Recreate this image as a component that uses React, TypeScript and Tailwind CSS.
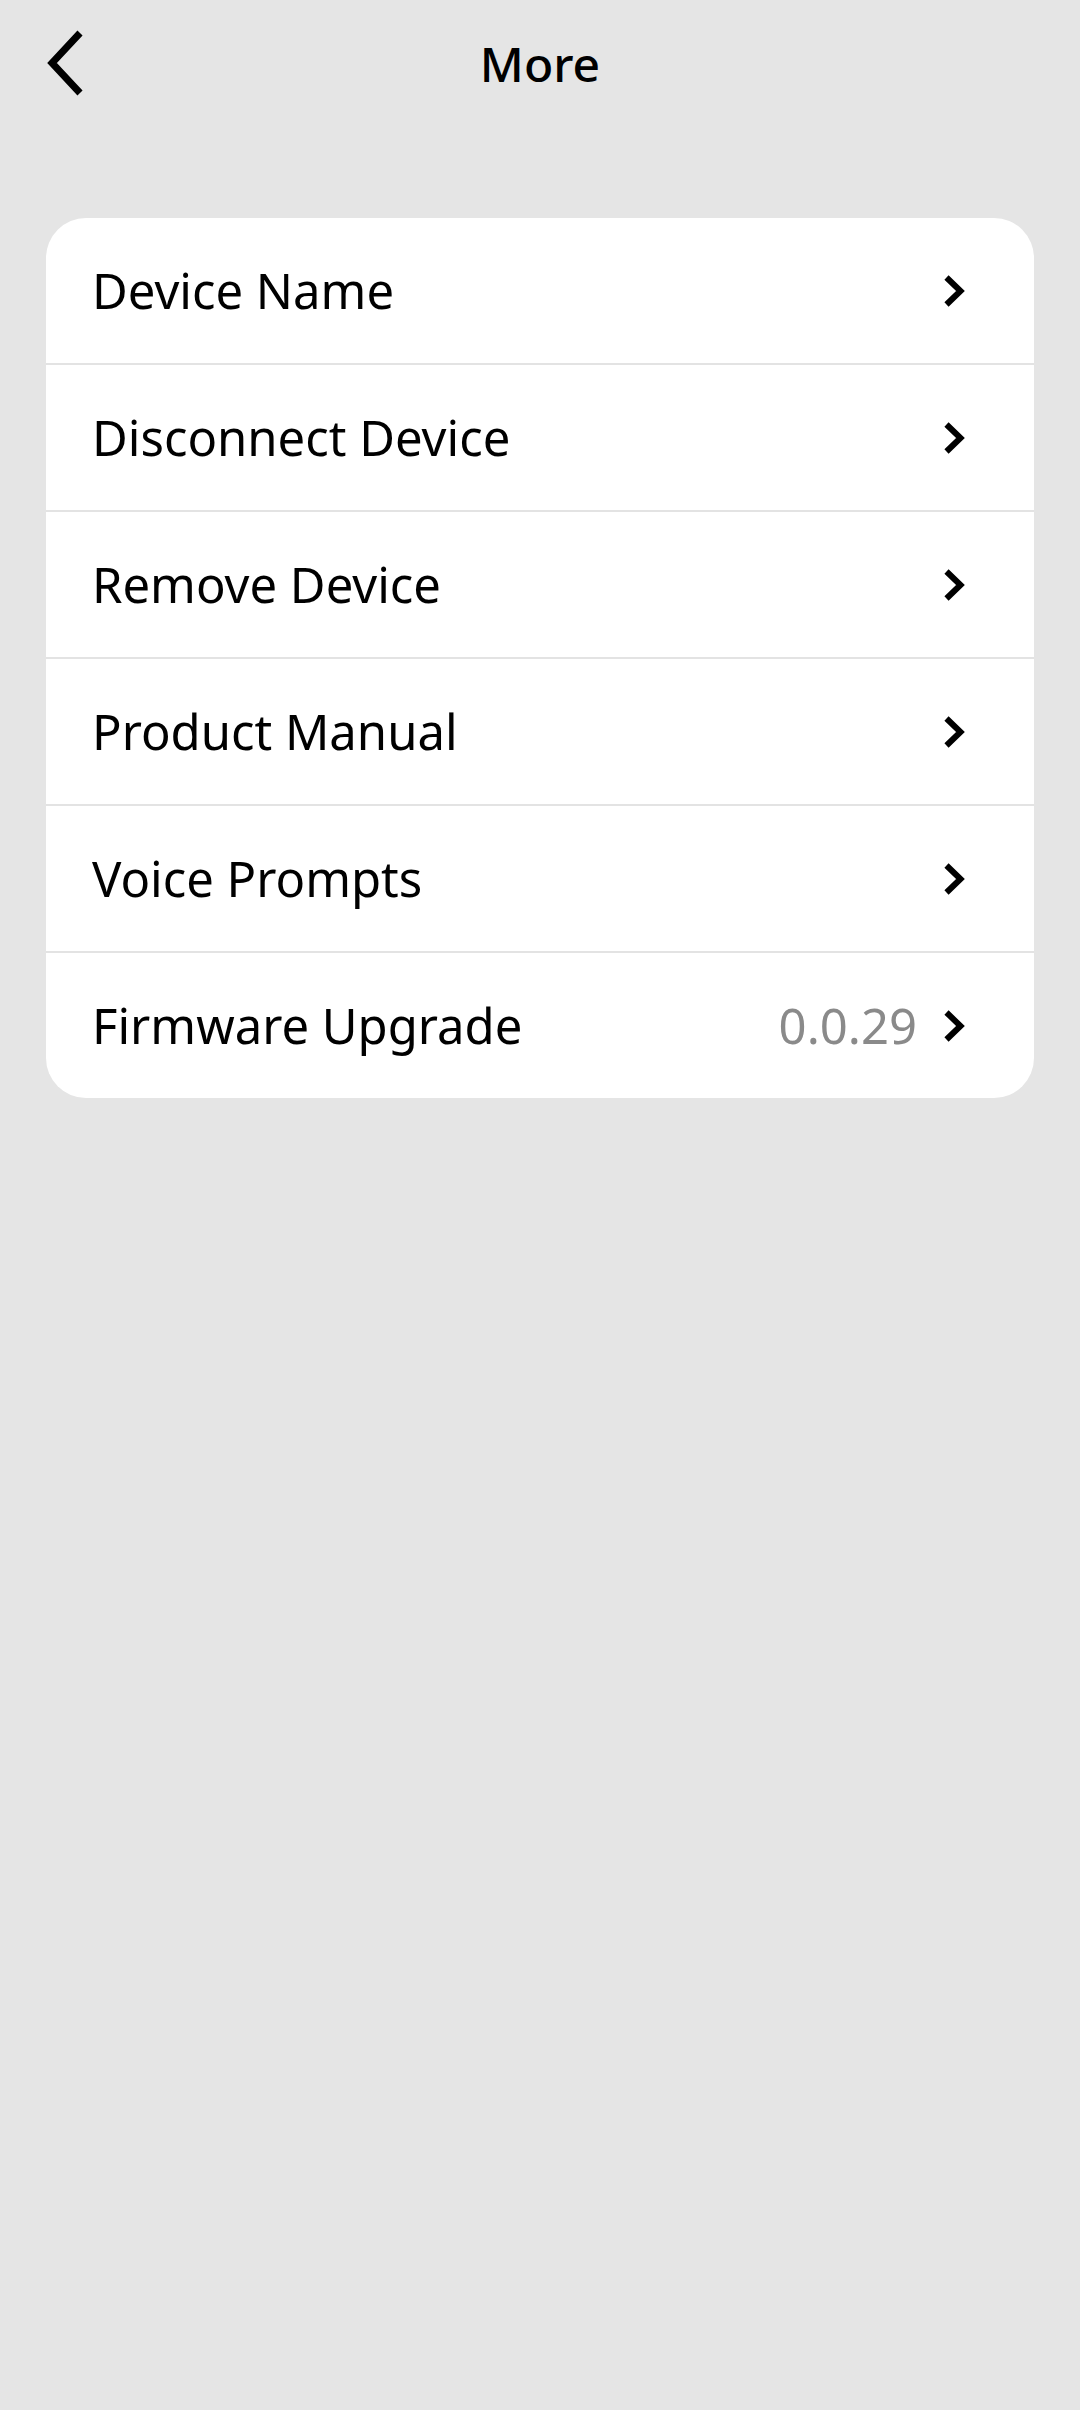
const rows = [
  { label: "Device Name" },
  { label: "Disconnect Device" },
  { label: "Remove Device" },
  { label: "Product Manual" },
  { label: "Voice Prompts" },
  { label: "Firmware Upgrade", value: "0.0.29" },
];

function Chevron() {
  return (
    <svg width="22" height="34" viewBox="0 0 22 34" fill="none" className="shrink-0">
      <polyline points="3.5,3.5 17.5,17 3.5,30.5" stroke="#000" strokeWidth="6" strokeLinejoin="miter" />
    </svg>
  );
}

export default function App() {
  return (
    <div className="min-h-[2410px] w-[1080px] bg-[#e5e5e5] font-['Noto_Sans',sans-serif] text-black">
      {/* Header */}
      <header className="grid h-[128px] grid-cols-[1fr_auto_1fr] items-center">
        <div className="pl-[44px]">
          <svg width="48" height="70" viewBox="0 0 48 70" fill="none">
            <polyline points="36,4 8,34 36,64" stroke="#000" strokeWidth="7" />
          </svg>
        </div>
        <h1 className="text-[48px] font-medium leading-none">More</h1>
        <div />
      </header>

      {/* Settings list */}
      <div className="mx-[46px] mt-[90px] overflow-hidden rounded-[40px] bg-white">
        {rows.map((row, i) => (
          <div key={row.label}>
            {i > 0 && <div className="h-[2px] bg-[#e3e3e3]" />}
            <div className="flex h-[145px] items-center pl-[46px] pr-[69px]">
              <span className="flex-1 text-[49px] leading-none">{row.label}</span>
              {row.value && (
                <span className="mr-[26px] text-[49px] leading-none text-[#8a8a8a]">{row.value}</span>
              )}
              <Chevron />
            </div>
          </div>
        ))}
      </div>
    </div>
  );
}
